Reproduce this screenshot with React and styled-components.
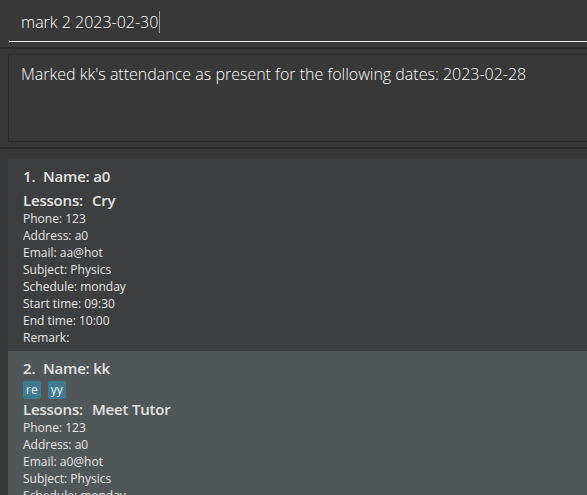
import React from "react";
import styled, { createGlobalStyle } from "styled-components";

const Global = createGlobalStyle`
  html, body { margin: 0; padding: 0; background: #383838; }
  body { font-family: "Open Sans", "Noto Sans", sans-serif; overflow: hidden; }
`;

const Shell = styled.div`
  width: 587px;
  height: 495px;
  overflow: hidden;
  background: #383838;
  display: flex;
  flex-direction: column;
`;

const CommandBar = styled.div`
  flex-shrink: 0;
  height: 49px;
  padding-left: 9px;
  box-sizing: border-box;
  border-bottom: 2px solid #2b2b2b;
  display: flex;
  flex-direction: column;
`;

const CommandField = styled.div`
  height: 42px;
  box-sizing: border-box;
  border-bottom: 1px solid #f2f2f2;
  display: flex;
  align-items: center;
  padding: 2px 0 0 12px;
  color: #ffffff;
  font-size: 16px;
  font-weight: 300;
`;

const Caret = styled.span`
  display: inline-block;
  width: 1px;
  height: 22px;
  background: #a0a0a0;
  margin-left: 1px;
`;

const ResultArea = styled.div`
  flex-shrink: 0;
  height: 100px;
  box-sizing: border-box;
  padding: 5px 0 5px 8px;
  border-bottom: 2px solid #2b2b2b;
  display: flex;
`;

const ResultBox = styled.div`
  flex: 1;
  margin-right: -20px;
  border: 1px solid #2b2b2b;
  padding: 8px 12px;
  color: #ffffff;
  font-size: 16px;
  line-height: 22px;
  font-weight: 300;
`;

const ListArea = styled.div`
  flex: 1;
  min-height: 0;
  overflow: hidden;
  padding: 10px 0 0 8px;
  display: flex;
  flex-direction: column;
`;

const Card = styled.div`
  flex-shrink: 0;
  background: ${(p) => (p.$odd ? "#515658" : "#3c3e3f")};
  padding: 7px 15px 5px;
  display: flex;
  flex-direction: column;
  color: #e6e6e6;
`;

const BigLine = styled.div`
  font-size: 15px;
  font-weight: 600;
  line-height: 20px;
  letter-spacing: -0.2px;
  color: #e2e2e2;
  display: flex;
  margin-top: ${(p) => p.$gap || 0}px;
`;

const Index = styled.span`
  width: 20px;
`;

const LessonLabel = styled.span`
  width: 69px;
`;

const Tags = styled.div`
  display: flex;
  gap: 7px;
  margin: 3px 0 0;
`;

const Tag = styled.span`
  background: #3e7b91;
  color: #f4f4f4;
  font-size: 12px;
  line-height: 18px;
  height: 18px;
  padding: 0 3px;
  border-radius: 2px;
`;

const SmallLine = styled.div`
  font-size: 12px;
  line-height: 17px;
`;

const people = [
  {
    name: "a0",
    tags: [],
    lesson: "Cry",
    phone: "123",
    address: "a0",
    email: "aa@hot",
    subject: "Physics",
    schedule: "monday",
    start: "09:30",
    end: "10:00",
    remark: "",
  },
  {
    name: "kk",
    tags: ["re", "yy"],
    lesson: "Meet Tutor",
    phone: "123",
    address: "a0",
    email: "a0@hot",
    subject: "Physics",
    schedule: "monday",
    start: "09:30",
    end: "10:00",
    remark: "",
  },
];

export default function App() {
  return (
    <Shell>
      <Global />
      <CommandBar>
        <CommandField>
          mark 2 2023-02-30<Caret />
        </CommandField>
      </CommandBar>
      <ResultArea>
        <ResultBox>
          Marked kk's attendance as present for the following dates: 2023-02-28
        </ResultBox>
      </ResultArea>
      <ListArea>
        {people.map((p, i) => (
          <Card key={i} $odd={i % 2 === 1}>
            <BigLine>
              <Index>{i + 1}.</Index>
              <span>Name: {p.name}</span>
            </BigLine>
            {p.tags.length > 0 && (
              <Tags>
                {p.tags.map((t) => (
                  <Tag key={t}>{t}</Tag>
                ))}
              </Tags>
            )}
            <BigLine $gap={p.tags.length > 0 ? 0 : 4}>
              <LessonLabel>Lessons:</LessonLabel>
              <span>{p.lesson}</span>
            </BigLine>
            <SmallLine>Phone: {p.phone}</SmallLine>
            <SmallLine>Address: {p.address}</SmallLine>
            <SmallLine>Email: {p.email}</SmallLine>
            <SmallLine>Subject: {p.subject}</SmallLine>
            <SmallLine>Schedule: {p.schedule}</SmallLine>
            <SmallLine>Start time: {p.start}</SmallLine>
            <SmallLine>End time: {p.end}</SmallLine>
            <SmallLine>Remark: {p.remark}</SmallLine>
          </Card>
        ))}
      </ListArea>
    </Shell>
  );
}
